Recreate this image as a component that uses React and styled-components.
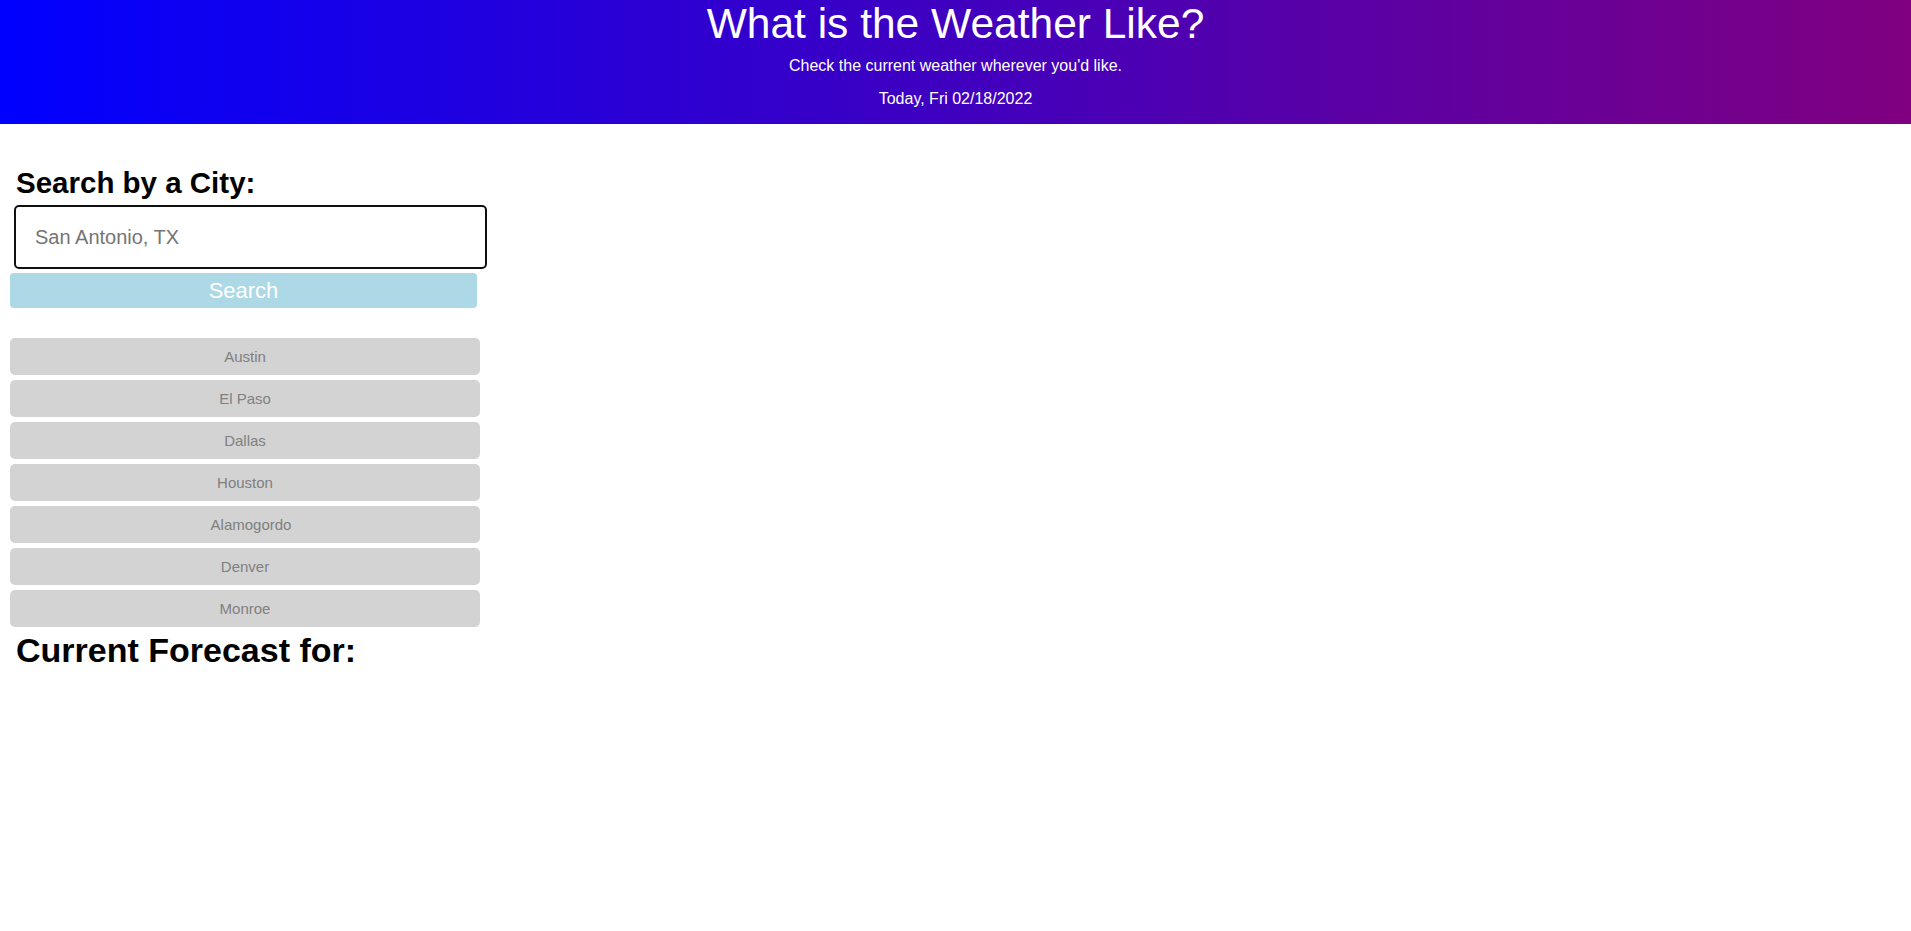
import React from "react";
import styled, { createGlobalStyle } from "styled-components";

const GlobalStyle = createGlobalStyle`
  body {
    margin: 0;
    background: #fff;
    font-family: "Liberation Sans", Arial, sans-serif;
  }
`;

const Header = styled.header`
  background: linear-gradient(to right, #0000ff, #800080);
  color: #fff;
  text-align: center;
  padding-bottom: 16px;
`;

const Title = styled.h1`
  margin: 0;
  font-size: 42.5px;
  font-weight: normal;
  line-height: 48px;
`;

const Lead = styled.p`
  margin: ${(p) => p.$top}px 0 0;
  font-size: 16px;
  line-height: 18px;
`;

const Main = styled.main`
  display: flex;
  flex-direction: column;
  align-items: flex-start;
  padding: 0 10px;
`;

const SectionTitle = styled.h2`
  margin: ${(p) => p.$top}px 0 0 6px;
  font-size: ${(p) => p.$size}px;
  line-height: ${(p) => p.$lh}px;
  font-weight: bold;
  color: #000;
`;

const CityInput = styled.input`
  box-sizing: border-box;
  margin: 5px 0 0 4px;
  width: 473px;
  height: 64px;
  padding: 0 19px;
  border: 2px solid #101010;
  border-radius: 5px;
  font-family: inherit;
  font-size: 20px;
  outline: none;

  &::placeholder {
    color: #757575;
  }
`;

const SearchButton = styled.button`
  margin-top: 4px;
  width: 467px;
  height: 35px;
  border: none;
  border-radius: 4px;
  background: #add8e6;
  color: #fff;
  font-family: inherit;
  font-size: 22px;
  padding: 0;
`;

const CityList = styled.div`
  display: flex;
  flex-direction: column;
  gap: 5px;
  margin-top: 30px;
`;

const CityButton = styled.button`
  width: 470px;
  height: 37px;
  border: none;
  border-radius: 5px;
  background: #d3d3d3;
  color: #808080;
  font-family: inherit;
  font-size: 15px;
  padding: 0 0 0 ${(p) => p.$indent || 0}px;
`;

const cities = [
  { name: "Austin" },
  { name: "El Paso" },
  { name: "Dallas" },
  { name: "Houston" },
  { name: "Alamogordo", indent: 12 },
  { name: "Denver" },
  { name: "Monroe" },
];

export default function App() {
  return (
    <>
      <GlobalStyle />
      <Header>
        <Title>What is the Weather Like?</Title>
        <Lead $top={9}>Check the current weather wherever you'd like.</Lead>
        <Lead $top={15}>Today, Fri 02/18/2022</Lead>
      </Header>
      <Main>
        <SectionTitle $top={42} $size={29.5} $lh={34}>Search by a City:</SectionTitle>
        <CityInput type="text" placeholder="San Antonio, TX" />
        <SearchButton>Search</SearchButton>
        <CityList>
          {cities.map((c) => (
            <CityButton key={c.name} $indent={c.indent}>{c.name}</CityButton>
          ))}
        </CityList>
        <SectionTitle $top={4} $size={34} $lh={39}>Current Forecast for:</SectionTitle>
      </Main>
    </>
  );
}
